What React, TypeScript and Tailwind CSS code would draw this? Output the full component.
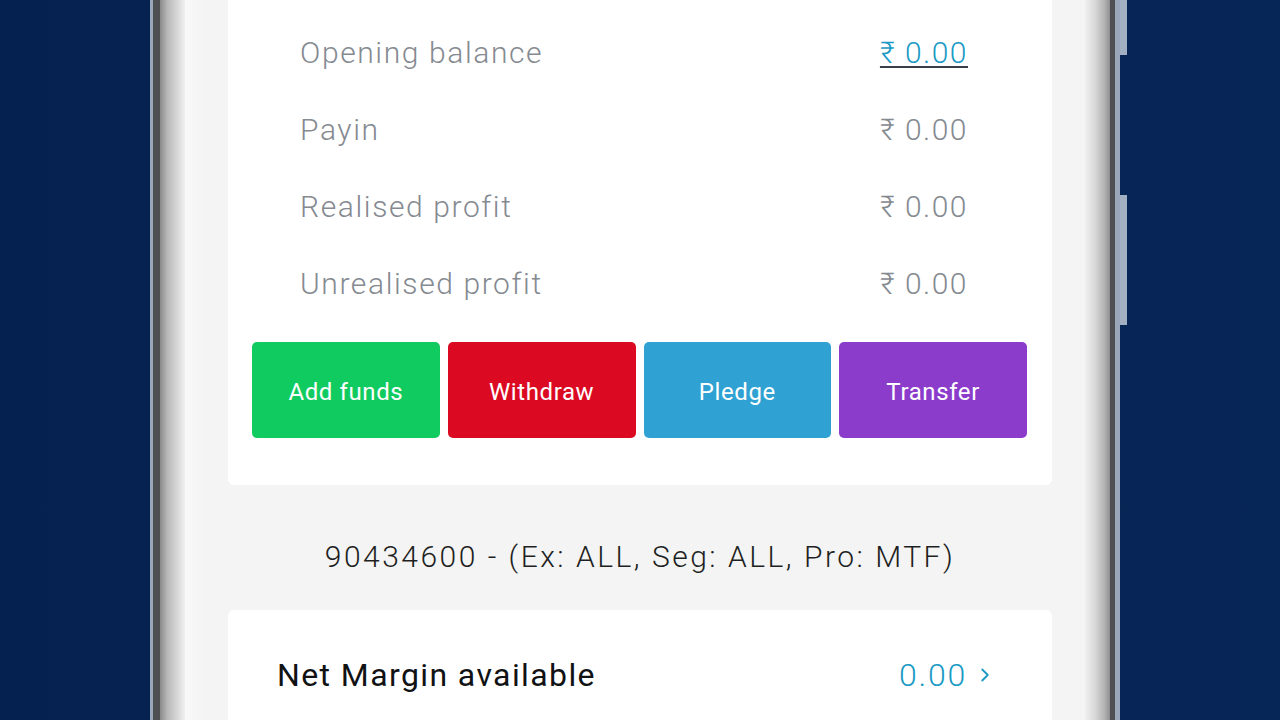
import { ChevronRight } from 'lucide-react';

type Row = { label: string; value: string; link?: boolean };

const rows: Row[] = [
  { label: 'Opening balance', value: '₹ 0.00', link: true },
  { label: 'Payin', value: '₹ 0.00' },
  { label: 'Realised profit', value: '₹ 0.00' },
  { label: 'Unrealised profit', value: '₹ 0.00' },
];

const actions = [
  { label: 'Add funds', color: 'bg-[#10cb5f]' },
  { label: 'Withdraw', color: 'bg-[#db0a22]' },
  { label: 'Pledge', color: 'bg-[#2fa2d3]' },
  { label: 'Transfer', color: 'bg-[#8b3ccb]' },
];

function BalanceRow({ row }: { row: Row }) {
  return (
    <div className="flex h-[77px] items-center justify-between pl-[72px] pr-[84px]">
      <span className="text-[30px] font-light tracking-[1.6px] text-[#858a91]">{row.label}</span>
      {row.link ? (
        <span className="text-[30px] font-light tracking-[1.5px] text-[#1a9ac4] underline decoration-[#3a3f45] decoration-[2px] underline-offset-[3px]">
          {row.value}
        </span>
      ) : (
        <span className="text-[30px] font-light tracking-[1.5px] text-[#858a91]">{row.value}</span>
      )}
    </div>
  );
}

export default function App() {
  return (
    <div className="flex h-[720px] w-[1280px] overflow-hidden bg-[linear-gradient(90deg,#05214f_0%,#062657_100%)] font-['Roboto',sans-serif]">
      <div className="w-[150px] shrink-0" />
      {/* left bezel */}
      <div className="flex w-[35px] shrink-0">
        <div className="w-[3px] bg-[#9aa7bb]" />
        <div className="w-[7px] bg-[#4d4f53]" />
        <div className="w-[25px] bg-[linear-gradient(90deg,#8a8a8a_0%,#b8b8b8_30%,#dcdcdc_75%,#f0f0f0_100%)]" />
      </div>

      {/* screen */}
      <div className="flex w-[900px] shrink-0 flex-col bg-[linear-gradient(90deg,#f8f8f8_0%,#f4f4f4_20px)] pl-[43px] pr-[33px]">
        <div className="rounded-b-[6px] bg-white pt-[14px] pb-[47px]">
          {rows.map((row) => (
            <BalanceRow key={row.label} row={row} />
          ))}
          <div className="mt-[20px] flex gap-[8px] pl-[24px] pr-[25px]">
            {actions.map((a) => (
              <div
                key={a.label}
                className={`flex h-[96px] flex-1 items-center justify-center rounded-[5px] pt-[4px] ${a.color} text-[24px] tracking-[0.6px] text-white`}
              >
                {a.label}
              </div>
            ))}
          </div>
        </div>

        <div className="h-[125px] pt-[54px] text-center text-[30px] font-light leading-[36px] tracking-[2.5px] text-[#1e1f22]">
          90434600 - (Ex: ALL, Seg: ALL, Pro: MTF)
        </div>

        <div className="flex-1 rounded-t-[6px] bg-white pl-[49px] pr-[56px] pt-[45px]">
          <div className="flex h-[40px] items-center justify-between">
            <span className="text-[32px] tracking-[1.4px] text-[#111214]">Net Margin available</span>
            <span className="flex items-center gap-[7px] text-[32px] font-light tracking-[1.8px] text-[#1a9ac4]">
              0.00
              <ChevronRight className="h-[22px] w-[22px]" strokeWidth={2} />
            </span>
          </div>
        </div>
      </div>

      {/* right bezel */}
      <div className="flex w-[42px] shrink-0">
        <div className="w-[25px] bg-[linear-gradient(90deg,#f0f0f0_0%,#d8d8d8_40%,#b0b0b0_80%,#8e8e8e_100%)]" />
        <div className="w-[5px] bg-[#4d4f53]" />
        <div className="w-[5px] bg-[#9aa7bb]" />
        <div className="flex w-[7px] flex-col">
          <div className="h-[55px] bg-[#a3b0c2]" />
          <div className="h-[140px]" />
          <div className="h-[130px] bg-[#a3b0c2]" />
        </div>
      </div>
      <div className="flex-1" />
    </div>
  );
}
